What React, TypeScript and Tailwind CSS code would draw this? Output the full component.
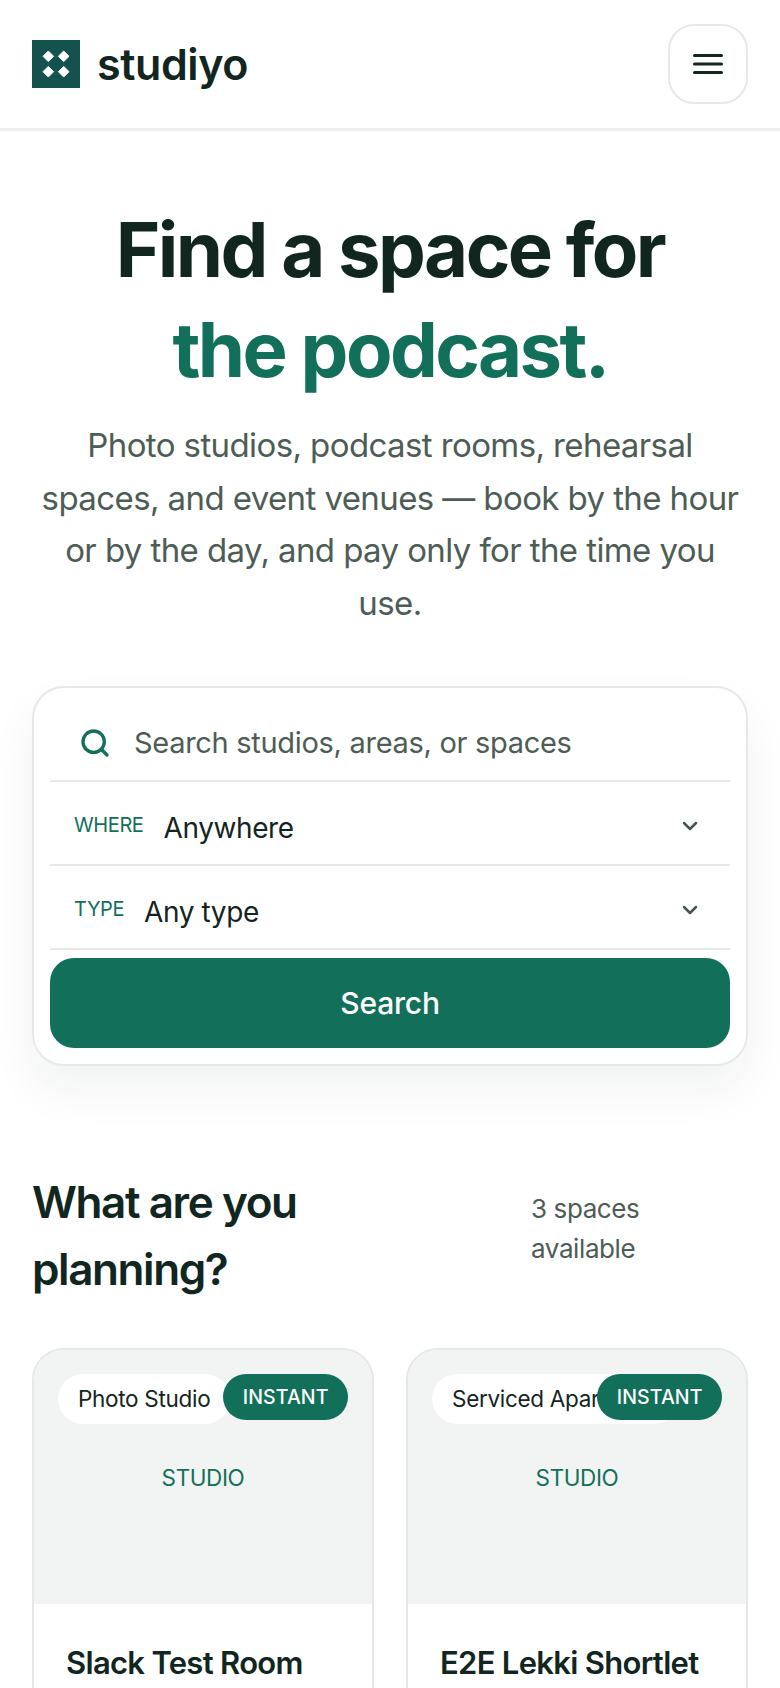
import React from 'react';
import { ChevronDown, Search } from 'lucide-react';

const spaces = [
  { title: 'Slack Test Room', kind: 'Photo Studio' },
  { title: 'E2E Lekki Shortlet', kind: 'Serviced Apartment' },
];

const FilterRow: React.FC<{ label: string; value: string }> = ({ label, value }) => (
  <div className="flex h-[84px] items-center border-b-2 border-[#e7e8e8] pl-6 pr-7 pt-[6px]">
    <span className="text-[20px] leading-none tracking-[-0.4px] text-[#12705a] -translate-y-[1px]">{label}</span>
    <span className="ml-5 flex-1 translate-y-[2px] text-[28px] tracking-[-0.4px] text-[#14241f]">{value}</span>
    <ChevronDown size={24} strokeWidth={2.5} className="text-[#46564f]" />
  </div>
);

const SpaceCard: React.FC<{ title: string; kind: string }> = ({ title, kind }) => (
  <div className="relative h-[400px] overflow-hidden rounded-[32px] border-2 border-[#e6e7e7] bg-white">
    <div className="flex h-[254px] justify-center bg-[#f2f3f3] pt-[108px]">
      <span className="text-[22.5px] leading-[40px] tracking-[-0.4px] text-[#12705a]">STUDIO</span>
    </div>
    {/* long labels run on underneath the INSTANT pill */}
    <span className="absolute left-6 top-6 whitespace-nowrap rounded-full bg-white px-5 py-[11px] text-[22.5px] leading-[28px] tracking-[-0.3px] text-[#14241f]">
      {kind}
    </span>
    <span className="absolute right-6 top-6 rounded-full bg-[#12705a] px-[19.5px] py-[9px] text-[19.5px] font-medium leading-[28px] tracking-[0.1px] text-white">
      INSTANT
    </span>
    <h3 className="px-8 pt-[37px] text-[31px] font-semibold leading-[44px] tracking-[-0.7px] text-[#11261f]">{title}</h3>
  </div>
);

export default function App() {
  return (
    <div className="h-screen overflow-hidden bg-white font-['Inter',sans-serif]">
      <header className="flex h-[131px] items-center justify-between border-b-[3px] border-[#eeeeee] pl-8 pr-8">
        <div className="flex items-center gap-[17px]">
          <div className="flex h-12 w-12 items-center justify-center bg-[#14524e]">
            <svg width="28" height="28" viewBox="0 0 28 28" fill="#ffffff" stroke="#ffffff" strokeWidth="1" strokeLinejoin="round">
              <path d="M6.3 1l5.3 5.3-5.3 5.3L1 6.3z" />
              <path d="M21.7 1L27 6.3l-5.3 5.3-5.3-5.3z" />
              <path d="M6.3 16.4l5.3 5.3L6.3 27 1 21.7z" />
              <path d="M21.7 16.4l5.3 5.3-5.3 5.3-5.3-5.3z" />
            </svg>
          </div>
          <span className="text-[43px] font-semibold leading-none tracking-[-0.4px] text-[#11261f]">studiyo</span>
        </div>
        <button className="flex h-[80px] w-[80px] items-center justify-center rounded-[26px] border-2 border-[#e8e8e8]">
          <svg width="30" height="20" viewBox="0 0 30 20" fill="none" stroke="#11261f" strokeWidth="3" strokeLinecap="round">
            <path d="M1.5 1.5h27" />
            <path d="M1.5 10h27" />
            <path d="M1.5 18.5h27" />
          </svg>
        </button>
      </header>

      <main className="px-8">
        <section className="pt-[68px] text-center">
          <h1 className="text-[76px] font-bold leading-[100px] tracking-[-2.6px] text-[#11261f]">
            Find a space for
            <br />
            <span className="text-[#12705a]">the podcast.</span>
          </h1>
          <p className="mx-auto mt-[20px] w-[716px] text-[33px] leading-[52.5px] tracking-[-0.6px] text-[#4d5d56]">
            Photo studios, podcast rooms, rehearsal spaces, and event venues — book by the hour or by the day, and pay only for the time you use.
          </p>
        </section>

        <section className="mt-[57px] rounded-[32px] border-2 border-[#e7e8e8] bg-white p-4 shadow-[0_24px_48px_rgba(17,38,31,0.06)]">
          <div className="flex h-[78px] items-center border-b-2 border-[#e7e8e8] pl-[29px] pt-[2px]">
            <Search size={32} strokeWidth={2.5} className="text-[#12705a]" />
            <span className="ml-[23px] text-[29px] tracking-[-0.3px] text-[#4d5d56]">Search studios, areas, or spaces</span>
          </div>
          <FilterRow label="WHERE" value="Anywhere" />
          <FilterRow label="TYPE" value="Any type" />
          <button className="mt-2 h-[90px] w-full rounded-[24px] bg-[#12705a] text-[30px] font-medium tracking-[-0.2px] text-white">
            Search
          </button>
        </section>

        <section className="mt-[103px]">
          <div className="flex items-start">
            <h2 className="w-[499px] text-[44px] font-semibold leading-[67px] tracking-[-1.4px] text-[#11261f]">
              What are you
              <br />
              planning?
            </h2>
            <p className="w-[140px] pt-[20px] text-[26px] leading-[40px] tracking-[-0.4px] text-[#4d5d56]">3 spaces available</p>
          </div>
          <div className="mt-[45px] grid grid-cols-2 gap-8">
            {spaces.map((space) => (
              <SpaceCard key={space.title} title={space.title} kind={space.kind} />
            ))}
          </div>
        </section>
      </main>
    </div>
  );
}
